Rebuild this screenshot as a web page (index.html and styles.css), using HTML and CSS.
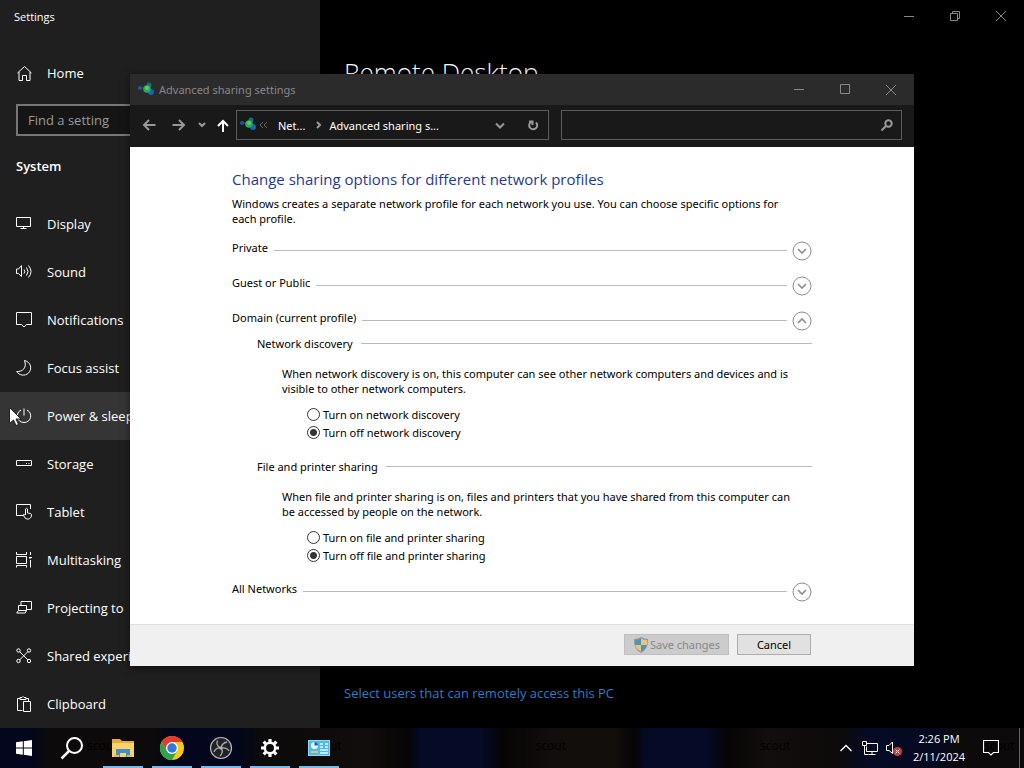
FILE: index.html
```html
<!DOCTYPE html>
<html lang="en">
<head>
    <meta charset="UTF-8">
    <meta name="viewport" content="width=device-width, initial-scale=1.0">
    <title>Advanced sharing settings</title>
    <link rel="stylesheet" href="styles.css">
</head>
<body>
    <!-- shared icon shapes -->
    <svg class="defs" aria-hidden="true">
        <symbol id="network" viewBox="0 0 18 16">
            <circle cx="3" cy="6" r="2" fill="#1a5aa0"/>
            <path d="M4 6h4" stroke="#1a5aa0" stroke-width="1"/>
            <circle cx="12" cy="3" r="2.500" fill="#14707c"/>
            <circle cx="14" cy="10" r="3" fill="#1565c0"/>
            <circle cx="10" cy="7" r="3.800" fill="#2fa850"/>
            <circle cx="10" cy="6" r="2" fill="#58cc74"/>
        </symbol>
        <symbol id="expand" viewBox="0 0 20 20">
            <circle cx="10" cy="10" r="9" fill="#fff" stroke="#8c8c8c"/>
            <path d="M6 8l4 4 4-4" stroke="#8c8c8c" stroke-width="1.6"/>
        </symbol>
        <symbol id="collapse" viewBox="0 0 20 20">
            <circle cx="10" cy="10" r="9" fill="#fff" stroke="#8c8c8c"/>
            <path d="M6 12l4-4 4 4" stroke="#8c8c8c" stroke-width="1.6"/>
        </symbol>
    </svg>

    <main class="settings">
        <nav class="sidebar">
            <div class="app-title">Settings</div>
            <a class="nav-item home" href="#"><svg viewBox="0 0 16 16"><path d="M1.500 8L8.500 1.500 15.500 8M3 7v8.500h3.500v-5h4v5H14V7"/></svg>Home</a>
            <input class="find" type="text" placeholder="Find a setting" aria-label="Find a setting">
            <h2>System</h2>
            <a class="nav-item" href="#"><svg viewBox="0 0 16 16"><path d="M.5 1.500h14v9H.5zM7.500 10.500v2M4.500 12.500h6"/></svg>Display</a>
            <a class="nav-item" href="#"><svg viewBox="0 0 16 16"><path d="M.5 5v4.500h2l3 3v-11L2.500 5zM8 5.500q1.500 2 0 4M10.500 3.500q3 4 0 8M12.500 1.500q5 6 0 12"/></svg>Sound</a>
            <a class="nav-item" href="#"><svg viewBox="0 0 16 16"><path d="M.5.5h15v12h-5L8 15l-2.500-2.500h-5z"/></svg>Notifications</a>
            <a class="nav-item" href="#"><svg viewBox="0 0 16 16"><path d="M8.500.5C15 2 16.500 9 12.500 13 9 16.500 3 15.500.7 11.500c6 .5 10.500-4 7.800-11z"/></svg>Focus assist</a>
            <a class="nav-item hovered" href="#"><svg viewBox="0 0 16 16"><path d="M8 .5v7M5 2C-1 5 .5 14.500 8 14.500S17 5 11 2"/></svg>Power &amp; sleep</a>
            <a class="nav-item" href="#"><svg viewBox="0 0 16 16"><path d="M.5 4.500h15v5H.5zM10 7.500h1M12.500 7.500h1"/></svg>Storage</a>
            <a class="nav-item" href="#"><svg viewBox="0 0 16 16"><path d="M7 11.500H.5v-11h14V5M9.500 11V5q1-1.500 2 0v4l3 .5q1 .5 1 1.500c0 5-6 5-7 2l-1.500-2q.5-1 2 0"/></svg>Tablet</a>
            <a class="nav-item" href="#"><svg viewBox="0 0 16 16"><path d="M.5 4.500h10v7H.5zM.5 0v2.500h10V0M.5 15.500v-2h10v2M14.500 0v3M14.500 8v7.500M13 5.500h3M14 5v2"/></svg>Multitasking</a>
            <a class="nav-item" href="#"><svg viewBox="0 0 16 16"><path d="M5 5V1.500h10.500v8H11M2.500 5.500h8v5h-8zM2.500 10.500L.7 13h8.500l1.300-2.500"/></svg>Projecting to</a>
            <a class="nav-item" href="#"><svg viewBox="0 0 16 16"><path d="M3.500 3.500L12 12M12 3.500L3.500 12"/><circle cx="2.500" cy="2.500" r="1.700"/><circle cx="13" cy="2.500" r="1.700"/><circle cx="2.500" cy="13" r="1.700"/><circle cx="13" cy="13" r="1.700"/></svg>Shared experiences</a>
            <a class="nav-item" href="#"><svg viewBox="0 0 16 16"><path d="M6.500 14.500h-5v-12H4M10 2.500h2.500V5M4 3.500v-2h2q1-2 2 0h2v2zM7.500 5.500h7v10h-7z"/></svg>Clipboard</a>
        </nav>

        <section class="page">
            <div class="window-buttons">
                <button aria-label="Minimize"><svg viewBox="0 0 12 12"><path d="M1 6.500h10"/></svg></button>
                <button aria-label="Restore"><svg viewBox="0 0 12 12"><path d="M1.500 3.500h7v7h-7zM3.500 3V1.500h7v7H9"/></svg></button>
                <button aria-label="Close"><svg viewBox="0 0 12 12"><path d="M1 1l10 10M11 1L1 11"/></svg></button>
            </div>
            <h1>Remote Desktop</h1>
            <a class="users-link" href="#">Select users that can remotely access this PC</a>
        </section>
    </main>

    <div class="dialog" role="dialog" aria-label="Advanced sharing settings">
        <header class="titlebar">
            <svg class="net-icon"><use href="#network"/></svg>
            <span>Advanced sharing settings</span>
            <div class="window-buttons">
                <button aria-label="Minimize"><svg viewBox="0 0 12 12"><path d="M1 5.500h10"/></svg></button>
                <button aria-label="Maximize"><svg viewBox="0 0 12 12"><path d="M1.500.5h9v9h-9z"/></svg></button>
                <button aria-label="Close"><svg viewBox="0 0 12 12"><path d="M1 1l10 10M11 1L1 11"/></svg></button>
            </div>
        </header>

        <div class="toolbar">
            <button class="arrow" aria-label="Back"><svg viewBox="0 0 14 14"><path d="M13.500 7H2M7 2L2 7l5 5"/></svg></button>
            <button class="arrow" aria-label="Forward"><svg viewBox="0 0 14 14"><path d="M.5 7H12M7 2l5 5-5 5"/></svg></button>
            <button class="recent" aria-label="Recent locations"><svg viewBox="0 0 8 8"><path d="M1 2l3 3 3-3"/></svg></button>
            <button class="up" aria-label="Up"><svg viewBox="0 0 14 14"><path d="M7 14V3M2 8l5-5 5 5"/></svg></button>
            <div class="address">
                <svg class="net-icon"><use href="#network"/></svg>
                <svg class="crumb-more" viewBox="0 0 10 8"><path d="M4 1L1 4l3 3M8 1L5 4l3 3"/></svg>
                <a href="#">Net...</a>
                <svg class="crumb-next" viewBox="0 0 8 8"><path d="M3 1l3 3-3 3"/></svg>
                <a href="#">Advanced sharing s...</a>
                <button class="drop" aria-label="Previous locations"><svg viewBox="0 0 12 12"><path d="M2 4.500l4 4 4-4"/></svg></button>
                <button aria-label="Refresh"><svg viewBox="0 0 12 12"><path d="M9 3.500A4 4 0 1 1 4 3M2 2.500h3.500V6"/></svg></button>
            </div>
            <div class="search">
                <input type="text" aria-label="Search">
                <svg viewBox="0 0 12 12"><circle cx="7.500" cy="4.500" r="3.200"/><path d="M5 7l-4.500 4.500"/></svg>
            </div>
        </div>

        <div class="content">
            <div class="inner">
                <h3>Change sharing options for different network profiles</h3>
                <p class="intro">Windows creates a separate network profile for each network you use. You can choose specific options for each profile.</p>

                <div class="profile">
                    <span>Private</span><hr>
                    <button aria-label="Expand Private"><svg><use href="#expand"/></svg></button>
                </div>
                <div class="profile">
                    <span>Guest or Public</span><hr>
                    <button aria-label="Expand Guest or Public"><svg><use href="#expand"/></svg></button>
                </div>
                <div class="profile">
                    <span>Domain (current profile)</span><hr>
                    <button aria-label="Collapse Domain"><svg><use href="#collapse"/></svg></button>
                </div>

                <div class="group">
                    <div class="group-title"><span>Network discovery</span><hr></div>
                    <div class="group-body">
                        <p>When network discovery is on, this computer can see other network computers and devices and is visible to other network computers.</p>
                        <div class="options">
                            <label><input type="radio" name="discovery">Turn on network discovery</label>
                            <label><input type="radio" name="discovery" checked>Turn off network discovery</label>
                        </div>
                    </div>
                </div>
                <div class="group">
                    <div class="group-title"><span>File and printer sharing</span><hr></div>
                    <div class="group-body">
                        <p>When file and printer sharing is on, files and printers that you have shared from this computer can be accessed by people on the network.</p>
                        <div class="options">
                            <label><input type="radio" name="sharing">Turn on file and printer sharing</label>
                            <label><input type="radio" name="sharing" checked>Turn off file and printer sharing</label>
                        </div>
                    </div>
                </div>

                <div class="profile">
                    <span>All Networks</span><hr>
                    <button aria-label="Expand All Networks"><svg><use href="#expand"/></svg></button>
                </div>
            </div>
        </div>

        <footer class="actions">
            <button class="save" disabled>
                <svg viewBox="0 0 16 16"><path d="M8 0Q5 2 1 2q-.5 10 7 14 7.500-4 7-14-4 0-7-2z" fill="#8b9aa3"/><path d="M8 1.500Q5.500 3 2 3v5h6z" fill="#4d94b8"/><path d="M8 1.500Q10.500 3 14 3v5H8z" fill="#ecc27c"/><path d="M2.200 8H8v6.500Q3 12 2.200 8z" fill="#ecc27c"/><path d="M13.800 8H8v6.500Q13 12 13.800 8z" fill="#4d94b8"/></svg>Save changes
            </button>
            <button>Cancel</button>
        </footer>
    </div>

    <footer class="taskbar">
        <div class="wallpaper" aria-hidden="true">
            <span>scout</span><span>scout</span><span>scout</span><span>scout</span><span>scout</span>
        </div>
        <button aria-label="Start"><svg class="small" viewBox="0 0 16 16"><path fill="#fff" d="M0 2.300L6.800 1.300v6.200H0zM7.800 1.200L16 0v7.500H7.800zM0 8.500h6.800v6.200L0 13.700zM7.800 8.500H16V16l-8.200-1.200z"/></svg></button>
        <button aria-label="Search"><svg viewBox="0 0 24 24" stroke="#fff"><circle cx="14.500" cy="9.500" r="7.500" stroke-width="2"/><path d="M9 15l-7.500 7.500" stroke-width="2.500"/></svg></button>
        <div class="apps">
            <button aria-label="File Explorer"><svg viewBox="0 0 24 24"><path d="M1 3h8l2 2h12v15H1z" fill="#e8a93a"/><path d="M1 7h22v14H1z" fill="#fbd36b"/><path d="M5 21v-8h14v8h-4v-4H9v4z" fill="#3f8fc9"/><path d="M3 19h5v2H3zM16 19h5v2h-5z" fill="#e9b94c"/></svg></button>
            <button aria-label="Chrome"><svg viewBox="0 0 24 24"><circle cx="12" cy="12" r="12" fill="#fbc916"/><path d="M1.600 6A12 12 0 0 1 22.400 6H12L7 15z" fill="#e33b2e"/><path d="M1.600 6A12 12 0 0 0 12 24l5.200-9-10.400 0z" fill="#2fa24f"/><circle cx="12" cy="12" r="6" fill="#fff"/><circle cx="12" cy="12" r="4.700" fill="#2f78dc"/></svg></button>
            <button aria-label="OBS Studio"><svg viewBox="0 0 24 24"><circle cx="12" cy="12" r="10.500" fill="#232226" stroke="#b9b9b9" stroke-width="1.200"/><path d="M8.500 4.500Q6.500 10 12 12q6-1 8 3M12 12q1-5 6-6M12 12q-5-1-7 4M12 12q3 4-1 8" stroke="#aaa" stroke-width="1.300"/><circle cx="12" cy="12" r="1.500" fill="#bbb"/></svg></button>
            <button aria-label="Settings"><svg viewBox="0 0 24 24" stroke="#fff"><circle cx="12" cy="12" r="5.200" stroke-width="2.500"/><path d="M12 3v3M12 18v3M3 12h3M18 12h3M5.600 5.600l2.200 2.200M16.200 16.200l2.200 2.200M18.400 5.600l-2.200 2.200M7.800 16.200l-2.200 2.200" stroke-width="3.200"/></svg></button>
            <button aria-label="Control Panel"><svg viewBox="0 0 24 24"><path d="M1 4h22v16H1z" fill="#8ed8f8"/><path d="M2 5h20v14H2z" fill="#4dbbea"/><circle cx="7.500" cy="9.500" r="3.500" fill="#e8f6fd"/><path d="M7.500 9.500V6a3.500 3.500 0 0 1 3.500 3.500z" fill="#1766a8"/><path d="M13 8h3M18 8h3M13 11h3M18 11h3M13 14h8M13 17h8" stroke="#e8f6fd" stroke-width="1.500"/><path d="M4 16h7" stroke="#f4c542" stroke-width="2"/></svg></button>
        </div>
        <div class="tray">
            <button aria-label="Show hidden icons"><svg viewBox="0 0 16 16" stroke="#fff"><path d="M2.500 11L8 5.500l5.500 5.500" stroke-width="1.300"/></svg></button>
            <button aria-label="Network"><svg viewBox="0 0 16 16" stroke="#fff"><path d="M4.500 3.500h11v8h-11v-5M10 11.500v3M6.500 14.500h7M.5 1.500h4v4h-4zM2.500 5.500v9h4"/></svg></button>
            <button aria-label="Volume"><svg viewBox="0 0 16 16" stroke="#fff"><path d="M.5 5.500h2.500l3.500-3.500v11.500L3 10.500H.5z"/><circle cx="11.500" cy="11.500" r="4.500" fill="#cc3a3a" stroke="none"/><path d="M9.700 9.700l3.600 3.600M13.300 9.700l-3.600 3.600"/></svg></button>
            <div class="clock">2:26 PM<br>2/11/2024</div>
            <button class="notes" aria-label="Notifications"><svg viewBox="0 0 16 16" stroke="#fff"><path d="M.5.5h15v12h-5L8 15l-2.500-2.500h-5z" stroke-width="1.200"/></svg></button>
            <button class="show-desktop" aria-label="Show desktop"></button>
        </div>
    </footer>

    <svg class="cursor" viewBox="0 0 12 19" aria-hidden="true"><path d="M.5.5v16l4-3.500 2.500 5.500 2.500-1-2.500-5.500h5z" fill="#fff" stroke="#222"/></svg>
</body>
</html>
```
FILE: styles.css
```css
* {
    box-sizing: border-box;
}

body {
    margin: 0;
    min-height: 100vh;
    display: flex;
    flex-direction: column;
    position: relative;
    background-color: #000;
    color: #fff;
    font-family: "Open Sans", "Noto Sans", sans-serif;
    font-size: 11px;
    overflow: hidden;
}

h1, h2, h3, p, hr {
    margin: 0;
}

a {
    color: inherit;
    text-decoration: none;
}

button {
    display: flex;
    align-items: center;
    justify-content: center;
    padding: 0;
    border: none;
    background: none;
    color: inherit;
    font: inherit;
}

svg {
    fill: none;
    flex-shrink: 0;
}

.defs {
    position: absolute;
    width: 0;
    height: 0;
}

/* settings window */
.settings {
    display: flex;
    height: calc(100vh - 40px);
    overflow: hidden;
}

.sidebar {
    width: 320px;
    flex-shrink: 0;
    background-color: #1f1f1f;
}

.app-title {
    padding: 8px 14px;
    line-height: 17px;
}

.nav-item {
    display: flex;
    align-items: center;
    gap: 15px;
    height: 48px;
    padding: 0 16px;
    font-size: 13px;
    white-space: nowrap;
}

.nav-item svg {
    width: 16px;
    height: 16px;
    stroke: #fff;
}

.nav-item.home {
    margin-top: 16px;
}

.nav-item.hovered {
    background-color: #353535;
}

.find {
    display: block;
    width: 288px;
    height: 32px;
    margin: 7px 16px 0;
    padding: 0 10px;
    border: 2px solid #777;
    background-color: #151515;
    color: #fff;
    font: inherit;
    font-size: 13px;
}

.find::placeholder {
    color: #9a9a9a;
}

.sidebar h2 {
    margin: 20px 16px 24px;
    font-size: 13px;
    line-height: 20px;
    font-weight: 600;
}

.page {
    flex: 1;
    display: flex;
    flex-direction: column;
    padding-left: 24px;
}

.window-buttons {
    display: flex;
    margin-left: auto;
}

.window-buttons button {
    width: 46px;
    height: 32px;
}

.window-buttons svg {
    width: 12px;
    height: 12px;
    stroke: #888;
}

.page h1 {
    margin-top: 22px;
    font-size: 26px;
    line-height: 36px;
    font-weight: 300;
}

.users-link {
    margin-top: auto;
    margin-bottom: 25px;
    color: #2f7cc4;
    font-size: 13px;
    line-height: 20px;
}

/* dialog window */
.dialog {
    position: absolute;
    top: 74px;
    left: 130px;
    right: 110px;
    background-color: #fff;
    color: #000;
    box-shadow: 0 2px 8px rgba(0, 0, 0, 0.5);
    font-family: "Noto Sans", sans-serif;
}

.titlebar {
    display: flex;
    align-items: center;
    height: 31px;
    padding-left: 7px;
    gap: 4px;
    background-color: #2b2b2b;
    color: #888;
}

.net-icon {
    width: 18px;
    height: 16px;
}

.toolbar {
    display: flex;
    align-items: center;
    height: 42px;
    padding: 0 12px 2px;
    background-color: #191919;
    color: #fff;
}

.toolbar svg {
    stroke: #999;
}

.toolbar .net-icon {
    stroke: none;
}

.arrow {
    width: 14px;
    margin-right: 16px;
}

.arrow svg, .up svg {
    width: 14px;
    height: 14px;
    stroke-width: 2;
}

.recent {
    width: 14px;
    margin-left: -7px;
}

.recent svg {
    width: 8px;
    height: 8px;
    stroke-width: 2;
}

.up {
    width: 14px;
    margin: 0 6px 0 7px;
}

.toolbar .up svg {
    stroke: #fff;
}

.address {
    flex: 300;
    display: flex;
    align-items: center;
    height: 30px;
    margin-right: 12px;
    padding: 0 9px 0 2px;
    border: 1px solid #5c5c5c;
}

.toolbar .crumb-more {
    width: 10px;
    height: 8px;
    margin: 0 9px 0 2px;
    stroke: #666;
}

.crumb-next {
    width: 8px;
    height: 8px;
    margin: 0 7px 0 9px;
    stroke-width: 2;
}

.address svg + a {
    white-space: nowrap;
}

.address button svg {
    width: 12px;
    height: 12px;
    stroke-width: 2;
}

.address .drop {
    margin-left: auto;
    margin-right: 21px;
}

.search {
    flex: 332;
    display: flex;
    align-items: center;
    height: 30px;
    padding-right: 8px;
    border: 1px solid #5c5c5c;
}

.search input {
    flex: 1;
    border: none;
    background: none;
    color: #fff;
    font: inherit;
}

.search svg {
    width: 12px;
    height: 12px;
    stroke-width: 2;
}

.content {
    padding: 20px 102px 22px;
    line-height: 15px;
}

.content h3 {
    margin-bottom: 4px;
    color: #1f3a93;
    font-family: "Open Sans", sans-serif;
    font-size: 15px;
    line-height: 25px;
    font-weight: 400;
}

.intro {
    padding-right: 20px;
}

.profile {
    display: flex;
    align-items: center;
    height: 21px;
    margin-top: 14px;
}

.profile span {
    margin-bottom: 6px;
}

.profile hr, .group-title hr {
    flex: 1;
    margin-left: 6px;
    border: none;
    border-top: 1px solid #bbb;
}

.group-title hr {
    margin-left: 8px;
}

.profile button {
    margin-left: 5px;
}

.profile svg {
    width: 20px;
    height: 20px;
}

.group {
    margin: 4px 0 17px 25px;
}

.group-title {
    display: flex;
    align-items: center;
    height: 16px;
}

.group-body {
    padding: 15px 8px 0 25px;
}

.options {
    margin: 9px 0 0 25px;
}

.options label {
    display: flex;
    align-items: center;
    gap: 3px;
    height: 18px;
}

.options input {
    appearance: none;
    width: 13px;
    height: 13px;
    margin: 0;
    border: 1px solid #333;
    border-radius: 50%;
}

.options input:checked {
    background: radial-gradient(circle, #333 3px, #fff 4px);
}

.actions {
    display: flex;
    justify-content: flex-end;
    gap: 8px;
    padding: 9px 103px 11px;
    border-top: 1px solid #dfdfdf;
    background-color: #f0f0f0;
}

.actions button {
    width: 74px;
    height: 21px;
    border: 1px solid #adadad;
    background-color: #e1e1e1;
}

.actions .save {
    width: 105px;
    border-color: #bfbfbf;
    background-color: #ccc;
    color: #888;
}

.save svg {
    width: 16px;
    height: 16px;
    margin-right: 1px;
}

/* taskbar */
.taskbar {
    position: relative;
    display: flex;
    height: 40px;
    background: linear-gradient(90deg, #03061c 0, #03061c 3%, #0c0a0a 5%, #0c0a0a 15%, #03061c 17%, #03061c 23%, #0c0a0a 26%, #100d0b 36%, #060405 40%, #050a26 41%, #050a26 47%, #060405 49%, #110e0c 54%, #110e0c 60%, #060405 62%, #050a26 63%, #050a26 69%, #060405 71%, #110e0c 75%, #0c0a0a 82%, #050a26 85%, #050a20 91%, #0c0a0a 94%);
}

.wallpaper {
    position: absolute;
    inset: 0;
    display: flex;
    gap: 194px;
    padding: 9px 0 0 87px;
    overflow: hidden;
    color: #000;
    font-size: 12px;
    line-height: 18px;
}

.taskbar button {
    position: relative;
    width: 48px;
    height: 40px;
}

.taskbar svg {
    width: 24px;
    height: 24px;
}

.taskbar .small {
    width: 16px;
    height: 16px;
}

.apps {
    display: flex;
    gap: 1px;
    margin-left: 3px;
}

.apps button {
    background: linear-gradient(#76b9ed, #76b9ed) center bottom / 40px 2px no-repeat;
}

.tray {
    position: relative;
    display: flex;
    align-items: center;
    margin-left: auto;
}

.tray button {
    width: 24px;
}

.tray svg {
    width: 16px;
    height: 16px;
}

.clock {
    width: 66px;
    line-height: 18px;
    text-align: center;
}

.tray .notes {
    width: 38px;
    margin-right: 9px;
}

.tray .show-desktop {
    width: 5px;
    border-left: 1px solid #666;
}

.cursor {
    position: absolute;
    top: 407px;
    left: 9px;
    width: 12px;
    height: 19px;
}
```
